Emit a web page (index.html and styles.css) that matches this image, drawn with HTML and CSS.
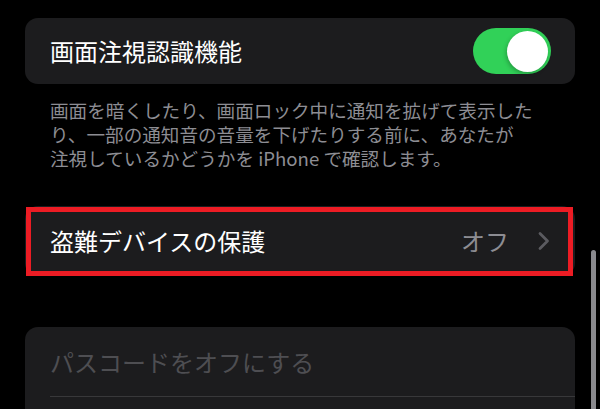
FILE: index.html
```html
<!DOCTYPE html>
<html lang="ja">
<head>
  <meta charset="UTF-8" />
  <meta name="viewport" content="width=device-width, initial-scale=1.0"/>
  <title>Face ID とパスコード</title>
  <link rel="stylesheet" href="styles.css">
</head>
<body>
  <div class="content">
    <div class="group">
      <div class="row row-attention">
        <span class="label">画面注視認識機能</span>
        <span class="toggle on"><span class="knob"></span></span>
      </div>
    </div>
    <p class="footer">画面を暗くしたり、画面ロック中に通知を拡げて表示した<br>り、一部の通知音の音量を下げたりする前に、あなたが<br>注視しているかどうかを iPhone で確認します。</p>

    <div class="group group-theft">
      <div class="row row-link">
        <span class="label">盗難デバイスの保護</span>
        <span class="value">オフ</span>
        <svg class="chevron" width="14" height="20" viewBox="0 0 14 20">
          <path d="M3 2.5 L10.5 10 L3 17.5" fill="none" stroke="currentColor" stroke-width="2.8" stroke-linecap="round" stroke-linejoin="round"/>
        </svg>
      </div>
      <div class="highlight"></div>
    </div>

    <div class="group group-passcode">
      <div class="row row-disabled">
        <span class="label">パスコードをオフにする</span>
      </div>
      <div class="row row-empty"></div>
    </div>
  </div>

  <div class="scrollbar"></div>
</body>
</html>
```

FILE: styles.css
```css
* { box-sizing: border-box; margin: 0; padding: 0; }
html, body { height: 100%; overflow: hidden; }
body { font-family: "Noto Sans CJK JP", "Noto Sans", sans-serif; background: #000; color: #fff; }
.content { padding: 18px 25px 0 25px; }
.group { background: #1c1c1e; border-radius: 13px; }
.row { display: flex; align-items: center; padding: 0 24px 0 25px; font-size: 24px; }
.row .label { flex-grow: 1; line-height: 1; }
.row-attention { height: 66px; }
.toggle { width: 78px; height: 46px; border-radius: 23px; background: #e5e5ea; position: relative; }
.toggle.on { background: #31d158; }
.knob { position: absolute; top: 3px; right: 3px; width: 41px; height: 41px; border-radius: 50%; background: #fff; box-shadow: -1px 2px 4px rgba(0,0,0,0.25); }
.footer { margin: 14px 0 0 25px; font-size: 18.6px; line-height: 24px; color: #8d8d93; }
.group-theft { position: relative; margin-top: 36px; }
.row-link { height: 70px; padding-right: 24px; }
.value { color: #8d8d93; line-height: 1; }
.chevron { margin-left: 28px; color: #5b5b60; }
.highlight { position: absolute; top: 1px; left: 1px; right: 2px; bottom: 0; border: 5px solid #ec1c24; }
.group-passcode { margin-top: 51px; }
.row-disabled { height: 69px; color: #4e4e52; }
.row-empty { height: 60px; margin-left: 25px; border-top: 1px solid #38383a; }
.scrollbar { position: fixed; top: 250px; right: 4px; width: 5px; height: 200px; border-radius: 3px; background: #8a8a8e; }
```
